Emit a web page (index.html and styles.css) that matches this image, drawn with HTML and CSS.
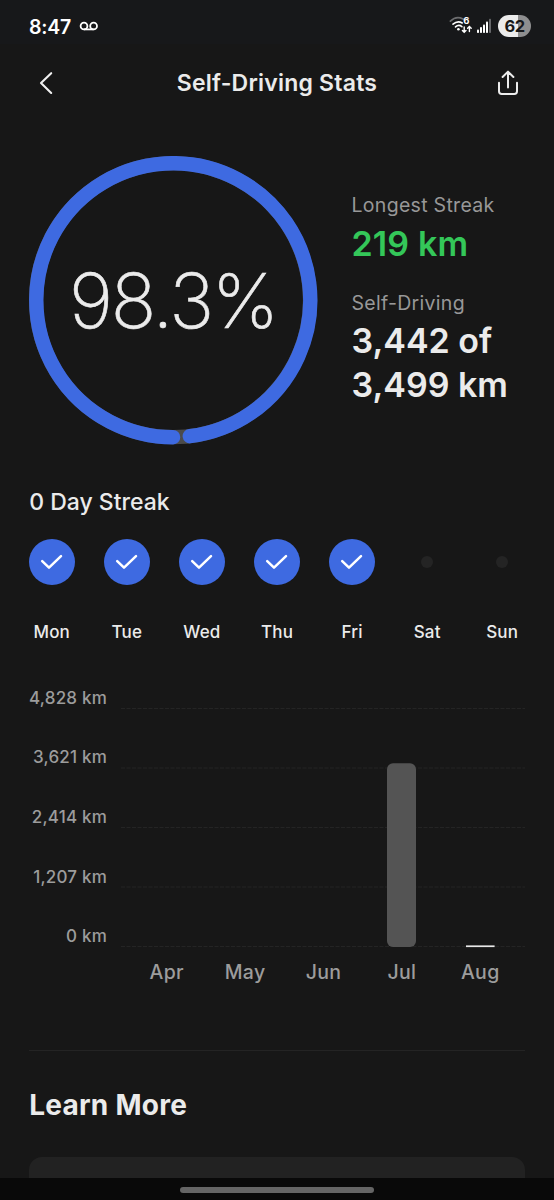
FILE: index.html
```html
<!DOCTYPE html>
<html lang="en">
<head>
<meta charset="utf-8">
<title>Self-Driving Stats</title>
<link rel="stylesheet" href="styles.css">
</head>
<body>
<div class="screen">
  <div class="status">
    <span class="time">8:47</span>
    <svg class="voicemail" width="20" height="10" viewBox="0 0 20 10" fill="none" stroke="#fff" stroke-width="1.8"><circle cx="5" cy="5" r="3.4"/><circle cx="14.6" cy="5" r="3.4"/><path d="M5 8.4h9.6"/></svg>
    <svg class="wifi" width="24" height="20" viewBox="0 0 24 20" fill="none" stroke="#fff" stroke-linecap="round">
      <path d="M1.4 5.2C5 1.6 10 1 14 3" stroke="#6c6d6f" stroke-width="1.7"/>
      <path d="M4 8.2C7 5.6 10.5 5.4 13.2 7M6.5 10.9c2-1.7 4.6-1.7 6.4-.2" stroke-width="1.6"/>
      <circle cx="9.4" cy="13.3" r="1.3" fill="#fff" stroke="none"/>
      <path d="M15.2 11v5M13.4 14.4l1.8 1.8 1.8-1.8M20.4 15.6v-5M18.6 12.2l1.8-1.8 1.8 1.8" stroke-width="1.4"/>
      <text class="wifi-gen" x="14.2" y="8.4">6</text>
    </svg>
    <svg class="signal" width="15" height="16" viewBox="0 0 15 16"><g fill="#fff"><rect x="0" y="11.6" width="2" height="3.4" rx=".8"/><rect x="3" y="9" width="2" height="6" rx=".8"/><rect x="6" y="6.5" width="2" height="8.5" rx=".8"/><rect x="9" y="3.4" width="2" height="11.6" rx=".8"/></g><rect x="12" y="0.8" width="2" height="14.2" rx=".8" fill="#66676a"/></svg>
    <span class="battery">62</span>
  </div>
  <header class="header">
    <svg class="back" width="16" height="24" viewBox="0 0 16 24" fill="none" stroke="#f0f0f0" stroke-width="2.1" stroke-linecap="round" stroke-linejoin="round"><path d="M13.2 2.2 3 12.1 13.2 22"/></svg>
    <h1>Self-Driving Stats</h1>
    <svg class="share" width="22" height="26" viewBox="0 0 22 26" fill="none" stroke="#ececec" stroke-width="2" stroke-linecap="round" stroke-linejoin="round"><path d="M2 12.7v8.6a2.7 2.7 0 0 0 2.7 2.7h12.6a2.7 2.7 0 0 0 2.7-2.7v-8.6M11 17.6V2M5.6 7 11 1.6 16.4 7"/></svg>
  </header>
  <main>
    <section class="summary">
      <div class="ring">
        <svg width="289" height="289" viewBox="-144 -144.2 289 289" fill="none">
          <circle r="137" stroke="#4b4b4b" stroke-width="14.2"/>
          <path d="M0.1 137A137 137 0 1 1 16.8 136" stroke="#3e6ae1" stroke-width="14.4" stroke-linecap="round"/>
        </svg>
        <span class="percent">98.3%</span>
      </div>
      <dl class="facts">
        <dt>Longest Streak</dt>
        <dd class="longest">219 km</dd>
        <dt>Self-Driving</dt>
        <dd class="distance">3,442 of<br>3,499 km</dd>
      </dl>
    </section>
    <h2 class="streak-title">0 Day Streak</h2>
    <ul class="week">
      <li><span class="dot done"><svg width="24" height="18" viewBox="0 0 24 18"><path d="M2.2 8.2 9 14.7 21 3.2"/></svg></span>Mon</li>
      <li><span class="dot done"><svg width="24" height="18" viewBox="0 0 24 18"><path d="M2.2 8.2 9 14.7 21 3.2"/></svg></span>Tue</li>
      <li><span class="dot done"><svg width="24" height="18" viewBox="0 0 24 18"><path d="M2.2 8.2 9 14.7 21 3.2"/></svg></span>Wed</li>
      <li><span class="dot done"><svg width="24" height="18" viewBox="0 0 24 18"><path d="M2.2 8.2 9 14.7 21 3.2"/></svg></span>Thu</li>
      <li><span class="dot done"><svg width="24" height="18" viewBox="0 0 24 18"><path d="M2.2 8.2 9 14.7 21 3.2"/></svg></span>Fri</li>
      <li><span class="dot"></span>Sat</li>
      <li><span class="dot"></span>Sun</li>
    </ul>
    <section class="chart">
      <div class="axis"><span>4,828 km</span><span>3,621 km</span><span>2,414 km</span><span>1,207 km</span><span>0 km</span></div>
      <div class="plot">
        <svg width="404" height="240" viewBox="0 0 404 240">
          <path class="grid" d="M0 .5H404M0 60H404M0 119.5H404M0 179H404M0 238.5H404"/>
          <rect x="266" y="55.3" width="29" height="183.7" rx="6" fill="#545454"/>
          <rect x="345" y="237.4" width="28.6" height="1.7" fill="#e8e8e8"/>
        </svg>
        <div class="months"><span>Apr</span><span>May</span><span>Jun</span><span>Jul</span><span>Aug</span></div>
      </div>
    </section>
    <section class="learn">
      <h2>Learn More</h2>
      <div class="card"></div>
    </section>
  </main>
  <footer class="nav"><div class="handle"></div></footer>
</div>
</body>
</html>
```
FILE: styles.css
```css
* { box-sizing: border-box; margin: 0; padding: 0; }
body { background: #171717; color: #ebebeb; font-family: Inter, "Liberation Sans", sans-serif; }
.screen { width: 554px; height: 1200px; overflow: hidden; display: flex; flex-direction: column; }
svg { display: block; flex: none; }
h1, h2 { white-space: nowrap; }

.status { height: 44px; flex: none; background: #17181a; display: flex; align-items: center; padding: 8px 23px 0 29px; color: #fff; }
.time { font-size: 19.5px; font-weight: 600; letter-spacing: -0.2px; width: 50px; padding-top: 1px; }
.wifi { margin-left: auto; }
.wifi-gen { font-size: 9.5px; font-weight: 700; fill: #fff; stroke: none; }
.signal { margin: 0 6px 0 4px; }
.battery { width: 33px; height: 22px; border-radius: 11px; background: linear-gradient(90deg, #ececec 62%, #8e8e8f 62%); color: #17181a; font-size: 16.5px; font-weight: 700; letter-spacing: -0.5px; line-height: 22px; text-align: center; }

.header { height: 77px; flex: none; display: flex; align-items: center; justify-content: space-between; padding: 0 35px 0 38px; }
.header h1 { font-size: 23px; font-weight: 600; letter-spacing: 0.22px; padding-left: 3px; }

main { flex: 1; min-height: 0; overflow: hidden; padding: 34.5px 29px 0 28.5px; }
.summary { display: flex; height: 290px; }
.ring { width: 289px; height: 289px; display: grid; place-items: center; flex: none; }
.ring > * { grid-area: 1 / 1; }
.percent { font-size: 75.5px; font-weight: 200; line-height: 90px; letter-spacing: -2.2px; padding-top: 2px; -webkit-text-stroke: 0.6px #ebebeb; }
.facts { padding: 37px 0 0 34px; white-space: nowrap; }
.facts dt { font-size: 19.5px; line-height: 24px; letter-spacing: 0.3px; color: #989898; }
.facts dd { font-size: 34px; line-height: 44px; font-weight: 600; }
.facts .longest { color: #34c759; margin: 5px 0 25px; letter-spacing: 0.15px; }
.facts .distance { margin-top: 4px; }

.streak-title { margin-top: 41.5px; padding-left: 0.7px; font-size: 23px; line-height: 30px; font-weight: 500; }
.week { list-style: none; display: flex; justify-content: space-between; margin: 21.5px -0.5px 0 0; }
.week li { width: 46.5px; display: flex; flex-direction: column; align-items: center; font-size: 17px; line-height: 22px; font-weight: 500; letter-spacing: 0.2px; }
.dot { width: 46.5px; height: 46.5px; display: grid; place-items: center; margin-bottom: 35.5px; }
.dot::before { content: ""; width: 12px; height: 12px; border-radius: 50%; background: #242424; grid-area: 1 / 1; }
.done::before { width: 46.5px; height: 46.5px; background: #3e6ae1; }
.dot svg { grid-area: 1 / 1; fill: none; stroke: #fff; stroke-width: 2.5; stroke-linecap: round; stroke-linejoin: round; }

.chart { display: flex; margin-top: 44px; height: 364px; border-bottom: 1px solid #242424; }
.axis { width: 78.5px; display: flex; flex-direction: column; align-items: flex-end; color: #9c9c9c; font-size: 17px; font-weight: 500; letter-spacing: 0.2px; line-height: 59.7px; margin-top: -18px; white-space: nowrap; }
.plot { margin: 21px 0 0 14px; width: 404px; }
.grid { stroke: #242424; stroke-width: 1; stroke-dasharray: 4 1.5; }
.months { display: grid; grid-template-columns: repeat(5, 78.4px); padding-left: 6.5px; text-align: center; color: #9c9c9c; font-size: 19.5px; font-weight: 500; letter-spacing: 0.3px; line-height: 24px; margin-top: 12.5px; }

.learn h2 { margin-top: 36.5px; padding-left: 0.7px; font-size: 28px; line-height: 36px; font-weight: 700; letter-spacing: 0.25px; }
.card { margin-top: 34px; height: 60px; border-radius: 13px; background: #222; }
.nav { height: 22px; flex: none; background: #090909; display: flex; justify-content: center; padding-top: 9px; }
.handle { width: 194px; height: 6px; border-radius: 3px; background: #656565; }
```
